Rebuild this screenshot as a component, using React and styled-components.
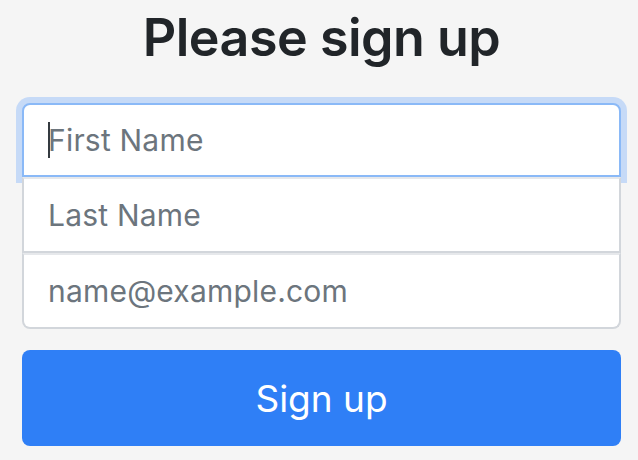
import React from "react";
import styled, {createGlobalStyle} from "styled-components";

const GlobalStyle = createGlobalStyle`
  html, body {
    margin: 0;
    padding: 0;
    background: #f5f5f5;
  }
  body {
    font-family: Inter, "Noto Sans", sans-serif;
    color: #212529;
  }
`;

const Page = styled.div`
  display: flex;
  justify-content: center;
  padding: 7px 17px 0 22px;
`;

const Form = styled.form`
  display: flex;
  flex-direction: column;
  width: 599px;
`;

const Title = styled.h1`
  margin: 0 0 34px;
  font-size: 52px;
  font-weight: 600;
  line-height: 1.2;
  text-align: center;
  letter-spacing: -0.5px;
  color: #212529;
`;

const Field = styled.div`
  position: relative;
  display: flex;
`;

const Input = styled.input`
  box-sizing: border-box;
  width: 100%;
  height: ${p => p.h}px;
  margin: 0;
  padding: 0 24px;
  font-family: Inter, "Noto Sans", sans-serif;
  font-size: 30px;
  letter-spacing: 0.2px;
  color: #495057;
  background: #fff;
  border: 2px solid #d2d6db;
  border-top-color: ${p => (p.first ? "#8ab9f7" : "#e6e8eb")};
  border-color: ${p => (p.first ? "#8ab9f7" : undefined)};
  border-radius: ${p =>
    p.first ? "8px 8px 0 0" : p.last ? "0 0 8px 8px" : "0"};
  box-shadow: ${p => (p.first ? "0 0 0 6px #c6daf7" : "none")};
  outline: none;

  &::placeholder {
    color: #6c757d;
    opacity: 1;
  }
`;

const Caret = styled.span`
  position: absolute;
  left: 26px;
  top: 19px;
  width: 2px;
  height: 36px;
  background: #343a40;
`;

const Button = styled.button`
  margin-top: 21px;
  height: 96px;
  border: none;
  border-radius: 8px;
  background: #2f7ff6;
  color: #fff;
  font-family: Inter, "Noto Sans", sans-serif;
  font-size: 37px;
  font-weight: 400;
  cursor: pointer;
`;

export default function App() {
  return (
    <Page>
      <GlobalStyle />
      <Form onSubmit={e => e.preventDefault()}>
        <Title>Please sign up</Title>
        <Field>
          <Input first h={74} placeholder="First Name" />
          <Caret />
        </Field>
        <Field>
          <Input h={76} placeholder="Last Name" />
        </Field>
        <Field>
          <Input last h={76} type="email" placeholder="name@example.com" />
        </Field>
        <Button type="submit">Sign up</Button>
      </Form>
    </Page>
  );
}
